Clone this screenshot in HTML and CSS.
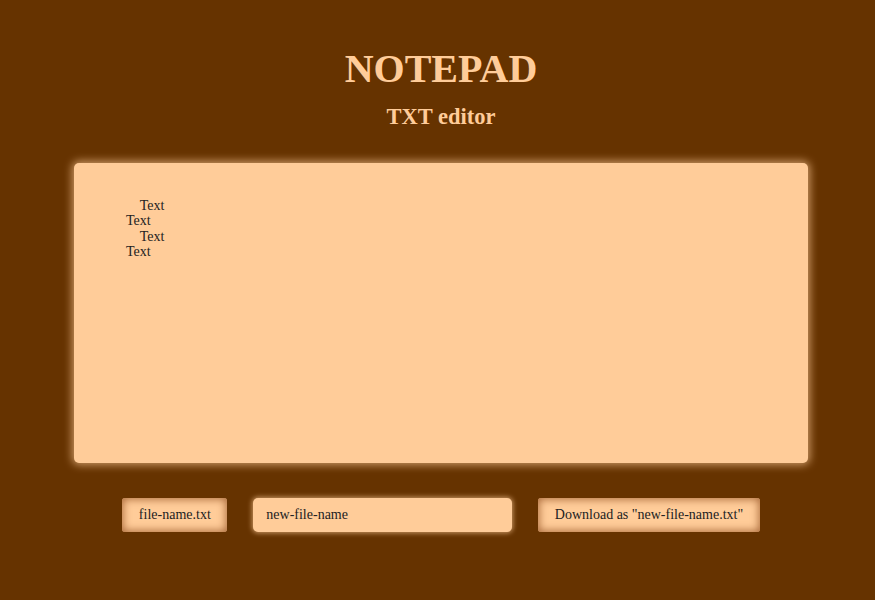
FILE: index.html
```html
<!DOCTYPE html>
<html>
<head>
<meta charset="utf-8">
<link rel="stylesheet" href="styles.css">
</head>
<body>
<main class="page">
  <h1 class="title">NOTEPAD</h1>
  <h2 class="subtitle">TXT editor</h2>
  <textarea class="editor">    Text
Text
    Text
Text</textarea>
  <div class="controls">
    <button class="btn btn-file">file-name.txt</button>
    <input class="name" type="text" value="new-file-name">
    <button class="btn">Download as "new-file-name.txt"</button>
  </div>
</main>
</body>
</html>
```
FILE: styles.css
```css
html, body {
  margin: 0;
  padding: 0;
  background: #663300;
  height: 100%;
}
.page {
  display: flex;
  flex-direction: column;
  align-items: center;
  padding: 0 0 0 7px;
  font-family: "Liberation Serif", serif;
}
.title {
  margin: 46px 0 0;
  font-size: 40px;
  line-height: 46px;
  color: #ffcc99;
  font-weight: bold;
}
.subtitle {
  margin: 12px 0 0;
  font-size: 22.5px;
  line-height: 26px;
  color: #ffcc99;
  font-weight: bold;
}
.editor {
  margin-top: 33px;
  width: 734px;
  height: 300px;
  box-sizing: border-box;
  padding: 35px 52px;
  background: #ffcc99;
  border: none;
  border-radius: 5px;
  box-shadow: 0 0 8px 2px #cc9966;
  font-family: "Liberation Serif", serif;
  font-size: 14px;
  line-height: 15.4px;
  color: #222;
  resize: none;
  outline: none;
  white-space: pre;
}
.controls {
  margin-top: 35px;
  display: flex;
  gap: 26px;
  align-items: center;
}
.btn {
  height: 34px;
  padding: 0 16.5px;
  background: #ffcc99;
  border: none;
  border-radius: 3px;
  box-shadow: inset 0 0 8px 1px #a86838;
  font-family: "Liberation Serif", serif;
  font-size: 14px;
  color: #222;
  white-space: nowrap;
}
.btn-file {
  padding: 0;
  width: 105px;
}
.name {
  width: 259px;
  height: 34px;
  box-sizing: border-box;
  padding: 0 13px;
  background: #ffcc99;
  border: none;
  border-radius: 5px;
  box-shadow: 0 0 5px 1px #cc9966;
  font-family: "Liberation Serif", serif;
  font-size: 14px;
  color: #222;
  outline: none;
}
```
